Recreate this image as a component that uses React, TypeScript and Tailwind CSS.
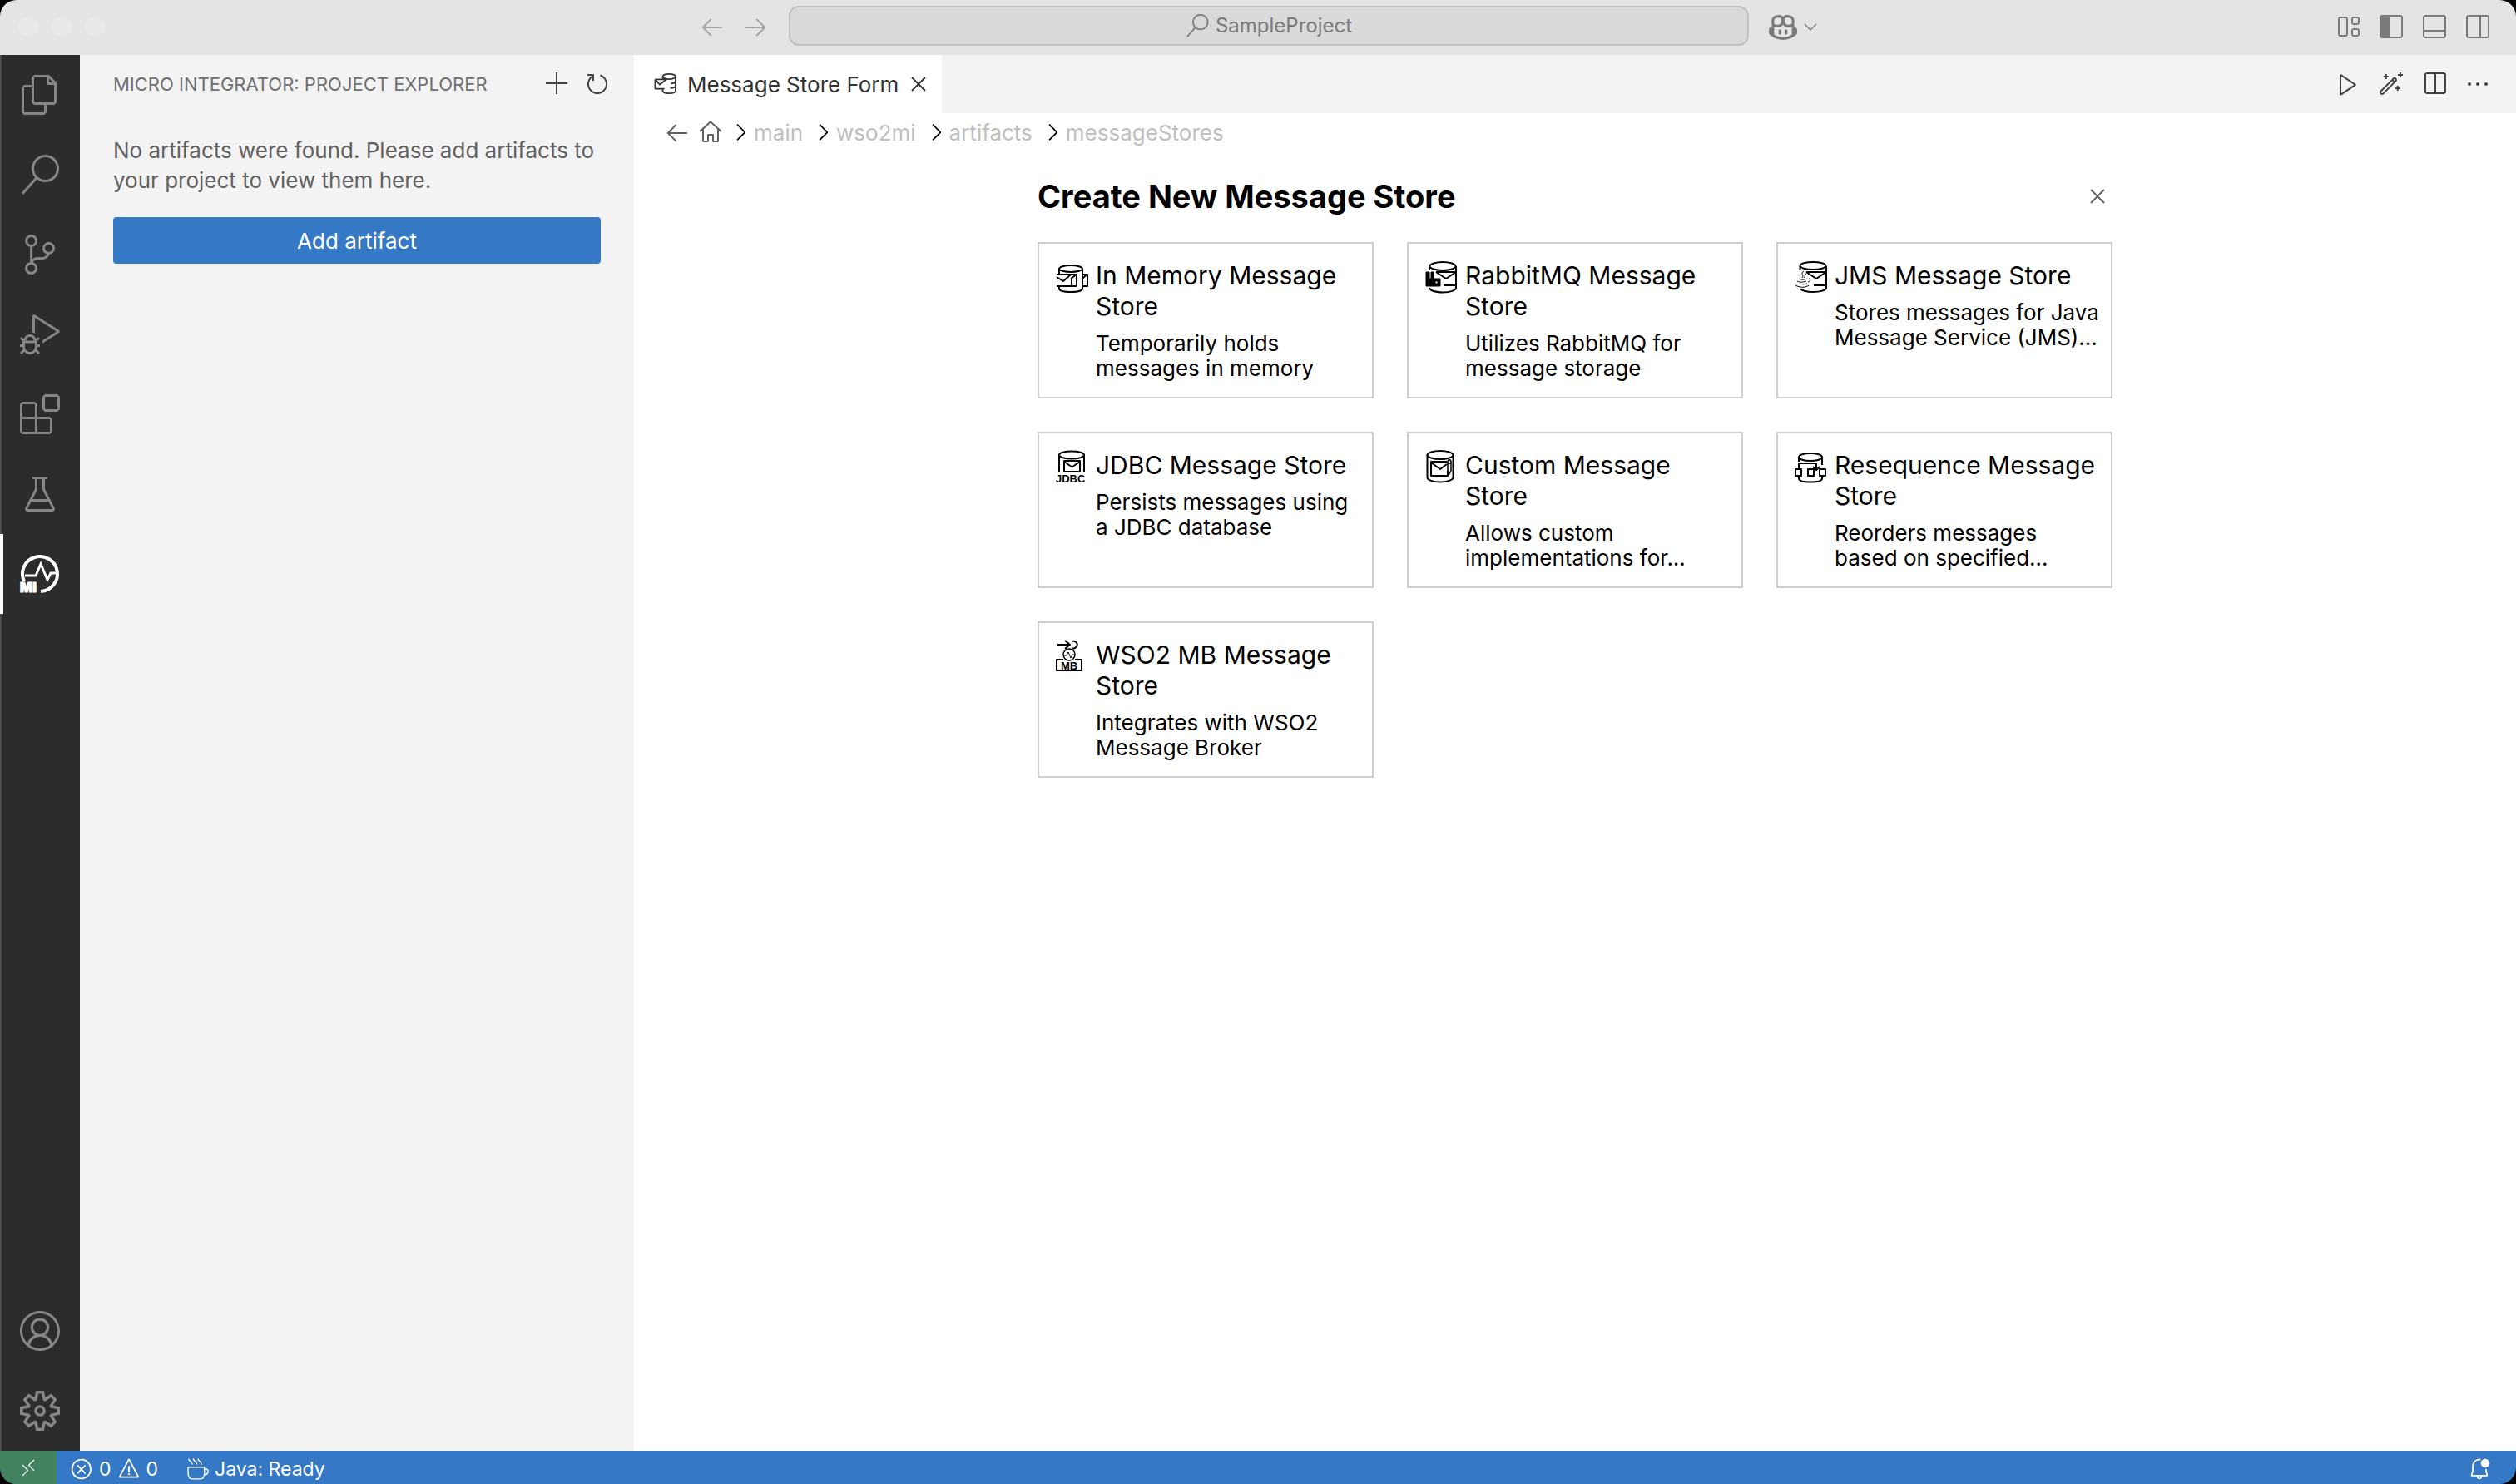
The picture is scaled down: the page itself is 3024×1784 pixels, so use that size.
import React from "react";
import {
  VscFiles,
  VscSearch,
  VscSourceControl,
  VscDebugAlt,
  VscExtensions,
  VscBeaker,
  VscAccount,
  VscSettingsGear,
  VscRemote,
  VscError,
  VscWarning,
  VscAdd,
  VscRefresh,
  VscClose,
  VscArrowLeft,
  VscArrowRight,
  VscHome,
  VscChevronRight,
  VscChevronDown,
  VscPlay,
  VscSplitHorizontal,
  VscEllipsis,
  VscWand,
  VscCopilot,
  VscLayout,
  VscLayoutSidebarLeft,
  VscLayoutPanelOff,
  VscLayoutSidebarRightOff,
  VscBellDot,
} from "react-icons/vsc";

const stroke = {
  fill: "none",
  stroke: "currentColor",
  strokeWidth: 2,
  strokeLinejoin: "round" as const,
};

function Svg({ children, className = "size-10 overflow-visible" }: { children: React.ReactNode; className?: string }) {
  return (
    <svg viewBox="0 0 40 40" className={className} aria-hidden="true" {...stroke}>
      {children}
    </svg>
  );
}

const InMemoryIcon = () => (
  <Svg>
    <ellipse cx="18" cy="10" rx="14" ry="4" />
    <path d="M4 10v7M32 10v24c0 2.500-6 4-14 4S4 36.500 4 34v-3M1 17h24M1 20l8 5 9-8M1 31h24M25 17v14M19 21v10M18 22l7-5M32 17h6v14h-6M32 22l5-5" />
  </Svg>
);

const RabbitIcon = () => (
  <Svg>
    <ellipse cx="21" cy="7" rx="15.500" ry="5" />
    <path d="M37 7v26c0 3-7 5.500-16 5.500-8 0-15-2-16-5.500M5 7v4M13 14h23M13 14l12 8 12-8M22 30h14" />
    <path
      d="M1 14h4v8h2v-8h3v8h8v9H1zM12 25v3h3v-3z"
      fill="currentColor"
      fillRule="evenodd"
      strokeWidth="1"
    />
  </Svg>
);

const JmsIcon = () => (
  <Svg>
    <ellipse cx="22" cy="6.500" rx="15.500" ry="4.500" />
    <path d="M6.500 7v4M38 7v26c0 3-7 5-16 5-8 0-14-2-15-4M14 14h23M14 14l12 8 12-8M23 30h14" />
    <path
      d="M11 13c-5 3 1 4-2 8M14 16c-4 2 0 3-3 5M5 22c3 2 8 1 10 0M3 25c4 2 9 1 11 0M17 22c3 0 2 3-1 4M1 30c5 3 12 3 16 0M6 28c3 1 6 1 9 0"
      strokeWidth="1"
    />
  </Svg>
);

const JdbcIcon = () => (
  <Svg>
    <ellipse cx="19" cy="6" rx="15" ry="4.500" />
    <path d="M4 6v21M34 6v21M10 13h19v13H10zM10 14l9.500 6.500L29 14" />
    <text
      x="0"
      y="39"
      fontSize="13"
      fontWeight="700"
      fontFamily="Liberation Sans, sans-serif"
      fill="currentColor"
      stroke="none"
    >
      JDBC
    </text>
  </Svg>
);

const CustomIcon = () => (
  <Svg>
    <ellipse cx="18" cy="6" rx="15.500" ry="5" />
    <path d="M2.500 6v27c0 3 7 5.500 15.500 5.500s15.500-2.500 15.500-5.500V6M26 14H7v17h20v-6M7 15l11 8 8-6" />
    <path d="M27 14c0-3 4-3 4 0v11l-2 4-2-4zM27 16h4" strokeWidth="1.500" />
  </Svg>
);

const ResequenceIcon = () => (
  <Svg>
    <ellipse cx="19" cy="8.500" rx="14" ry="4.500" />
    <path d="M5 9v5M33 9v9M5 22v-6h21v8M22 20l4 4 4-4M5 32v2c0 3 6 4.500 14 4.500s14-1.500 14-4.500v-2M1 23h7v8H1zM16 23h7v8h-7zM30 23h7v8h-7z" />
  </Svg>
);

const MbIcon = () => (
  <Svg>
    <path d="M2 6h15M11 1l6 5-6 5M19 2c9-2 9 9 0 9M9 24H1v13h30V24h-8" />
    <circle cx="16" cy="18" r="7" strokeWidth="1.500" />
    <path d="M9 19h4l2-4 3 7 2-4h3" strokeWidth="1" />
    <text
      x="6"
      y="36"
      fontSize="13"
      fontWeight="700"
      fontFamily="Liberation Sans, sans-serif"
      fill="currentColor"
      stroke="none"
    >
      MB
    </text>
  </Svg>
);

const StoreTabIcon = () => (
  <Svg className="size-7">
    <ellipse cx="26" cy="7" rx="11" ry="4.500" strokeWidth="2.500" />
    <path
      d="M15 7v4M37 7v24c0 3-5 5-11 5-5 0-10-1-11-4v-4M37 15c0 3-4 4-8 4M37 23c0 3-4 4-9 4M2 12h20M2 12v16h16M2 12l8 9 11-9"
      strokeWidth="2.500"
    />
  </Svg>
);

const MiLogo = () => (
  <svg viewBox="0 0 48 48" className="size-12 overflow-visible" aria-hidden="true" fill="none" stroke="currentColor">
    <path d="M5 33A21 21 0 1 1 25 45" strokeWidth="4" />
    <path d="M6 26h13l6-14 8 19 4-8h8" strokeWidth="3" />
    <text
      x="0"
      y="46"
      fontSize="16"
      fontWeight="900"
      fontFamily="Inter, sans-serif"
      fill="currentColor"
      strokeWidth="1"
    >
      MI
    </text>
  </svg>
);

const stores = [
  { title: "In Memory Message Store", text: "Temporarily holds messages in memory", Icon: InMemoryIcon },
  { title: "RabbitMQ Message Store", text: "Utilizes RabbitMQ for message storage", Icon: RabbitIcon },
  { title: "JMS Message Store", text: "Stores messages for Java Message Service (JMS)...", Icon: JmsIcon },
  { title: "JDBC Message Store", text: "Persists messages using a JDBC database", Icon: JdbcIcon },
  { title: "Custom Message Store", text: "Allows custom implementations for...", Icon: CustomIcon },
  { title: "Resequence Message Store", text: "Reorders messages based on specified...", Icon: ResequenceIcon },
  { title: "WSO2 MB Message Store", text: "Integrates with WSO2 Message Broker", Icon: MbIcon },
];

const activities = [
  { label: "Explorer", Icon: VscFiles },
  { label: "Search", Icon: VscSearch },
  { label: "Source Control", Icon: VscSourceControl },
  { label: "Run and Debug", Icon: VscDebugAlt },
  { label: "Extensions", Icon: VscExtensions },
  { label: "Testing", Icon: VscBeaker },
];

function TitleBar() {
  return (
    <header className="flex h-[66px] shrink-0 items-center bg-[#e4e4e4] pb-0.5 text-[#7a7a7a]">
      <div className="flex grow basis-20 items-center justify-between pl-[22px] pr-6">
        <div className="flex gap-4">
          <span className="size-6 rounded-full bg-[#e8e8e8]" />
          <span className="size-6 rounded-full bg-[#e8e8e8]" />
          <span className="size-6 rounded-full bg-[#e8e8e8]" />
        </div>
        <div className="flex gap-5 text-[#a3a3a3]">
          <button aria-label="Go back"><VscArrowLeft className="size-8" /></button>
          <button aria-label="Go forward"><VscArrowRight className="size-8" /></button>
        </div>
      </div>
      <button className="mb-0.5 flex h-12 w-[1154px] items-center justify-center gap-2 rounded-xl border-2 border-[#c1c1c1] bg-[#d9d9d9] text-2xl">
        <VscSearch className="size-7" />
        SampleProject
      </button>
      <div className="flex grow basis-0 items-center justify-between pl-6 pr-[30px]">
        <button className="flex items-center gap-1" aria-label="Copilot">
          <VscCopilot className="size-[34px]" />
          <VscChevronDown className="size-6" />
        </button>
        <div className="flex gap-5">
          <button aria-label="Customize layout"><VscLayout className="size-8" /></button>
          <button aria-label="Toggle side bar"><VscLayoutSidebarLeft className="size-8" /></button>
          <button aria-label="Toggle panel"><VscLayoutPanelOff className="size-8" /></button>
          <button aria-label="Toggle secondary side bar"><VscLayoutSidebarRightOff className="size-8" /></button>
        </div>
      </div>
    </header>
  );
}

function ActivityBar() {
  return (
    <nav className="flex w-24 shrink-0 flex-col justify-between bg-[#2c2c2c] text-[#868686] shadow-[inset_2px_0_#4d4d4d]">
      <div className="flex flex-col">
        {activities.map(({ label, Icon }) => (
          <button key={label} aria-label={label} className="flex h-24 items-center justify-center">
            <Icon className="size-12" />
          </button>
        ))}
        <button
          aria-label="Micro Integrator"
          className="flex h-24 items-center justify-center text-white shadow-[inset_4px_0_#ffffff]"
        >
          <MiLogo />
        </button>
      </div>
      <div className="flex flex-col">
        <button aria-label="Accounts" className="flex h-24 items-center justify-center">
          <VscAccount className="size-12" />
        </button>
        <button aria-label="Manage" className="flex h-24 items-center justify-center">
          <VscSettingsGear className="size-12" />
        </button>
      </div>
    </nav>
  );
}

function SideBar() {
  return (
    <aside className="w-[666px] shrink-0 bg-[#f3f3f3] px-10 text-[#616161]">
      <div className="flex h-[70px] items-center justify-between">
        <h2 className="text-[22px] text-[#6f6f6f]">MICRO INTEGRATOR: PROJECT EXPLORER</h2>
        <div className="-mr-3 flex gap-4 text-[#424242]">
          <button aria-label="Add"><VscAdd className="size-8" /></button>
          <button aria-label="Refresh"><VscRefresh className="size-8" /></button>
        </div>
      </div>
      <p className="mt-[27px] text-[26px] leading-9">
        No artifacts were found. Please add artifacts to your project to view them here.
      </p>
      <button className="mt-[26px] h-14 w-full rounded bg-[#3578c6] text-[26px] text-white">Add artifact</button>
    </aside>
  );
}

function Editor() {
  return (
    <main className="flex min-w-0 flex-1 flex-col bg-white">
      <div className="flex h-[70px] shrink-0 justify-between bg-[#f3f3f3]">
        <div className="flex items-center bg-white pl-6 pr-3 text-[26px] text-[#333]">
          <StoreTabIcon />
          <span className="ml-3">Message Store Form</span>
          <button aria-label="Close tab" className="ml-2"><VscClose className="size-8" /></button>
        </div>
        <div className="flex items-center gap-5 pr-[30px] text-[#424242]">
          <button aria-label="Run"><VscPlay className="size-8" /></button>
          <button aria-label="Build"><VscWand className="size-8" /></button>
          <button aria-label="Split editor"><VscSplitHorizontal className="size-8" /></button>
          <button aria-label="More actions"><VscEllipsis className="size-8" /></button>
        </div>
      </div>
      <nav aria-label="Breadcrumb" className="flex h-[46px] shrink-0 items-center pl-9 text-[26px] text-[#bfbfbf]">
        <button aria-label="Back" className="text-[#616161]"><VscArrowLeft className="size-8" /></button>
        <button aria-label="Home" className="ml-2 text-[#616161]"><VscHome className="size-8" /></button>
        {["main", "wso2mi", "artifacts", "messageStores"].map((name) => (
          <React.Fragment key={name}>
            <VscChevronRight className="ml-1 size-8 text-black" />
            <a href="#" className="mr-1">{name}</a>
          </React.Fragment>
        ))}
      </nav>
      <section className="mx-auto w-[1292px] pt-[30px]">
        <div className="flex h-12 items-center justify-between pr-0.5">
          <h1 className="text-[38px] font-bold text-black">Create New Message Store</h1>
          <button aria-label="Close form" className="text-[#616161]"><VscClose className="size-8" /></button>
        </div>
        <div className="mt-[31px] grid auto-rows-[188px] grid-cols-3 gap-10">
          {stores.map(({ title, text, Icon }) => (
            <button
              key={title}
              className="flex items-start gap-2 border-2 border-[#cecece] pl-5 pr-3 pt-5 text-left text-black"
            >
              <span className="shrink-0"><Icon /></span>
              <span className="block">
                <span className="block text-[30px] leading-[37px]">{title}</span>
                <span className="mt-[11px] block text-[26px] leading-[30px]">{text}</span>
              </span>
            </button>
          ))}
        </div>
      </section>
    </main>
  );
}

function StatusBar() {
  return (
    <footer className="flex h-10 shrink-0 items-center bg-[#3578c6] text-[23px] leading-8 text-white">
      <button aria-label="Remote" className="flex h-full w-[68px] items-center justify-center bg-[#41825f] pt-0.5">
        <VscRemote className="size-6" />
      </button>
      <button className="ml-4 flex items-center gap-[7px] pt-1">
        <VscError className="size-7" />0
        <VscWarning className="size-7" />0
      </button>
      <button className="ml-[34px] flex items-center gap-1.5 pt-1">
        <Svg className="size-7">
          <path d="M3 17h28v10c0 7-3 10-8 10h-12c-5 0-8-3-8-10zM31 20h3c5 0 5 10-4 10M4 2c0 5 6 4 6 10M12 2c0 5 6 4 6 10M20 2c0 5 6 4 6 10" />
        </Svg>
        Java: Ready
      </button>
      <button aria-label="Notifications" className="ml-auto mr-[30px] pt-1"><VscBellDot className="size-7" /></button>
    </footer>
  );
}

export default function App() {
  return (
    <div className="min-h-screen bg-black font-['Inter',sans-serif]">
      <div className="flex min-h-screen flex-col overflow-hidden rounded-[20px]">
        <TitleBar />
        <div className="flex flex-1">
          <ActivityBar />
          <SideBar />
          <Editor />
        </div>
        <StatusBar />
      </div>
    </div>
  );
}
